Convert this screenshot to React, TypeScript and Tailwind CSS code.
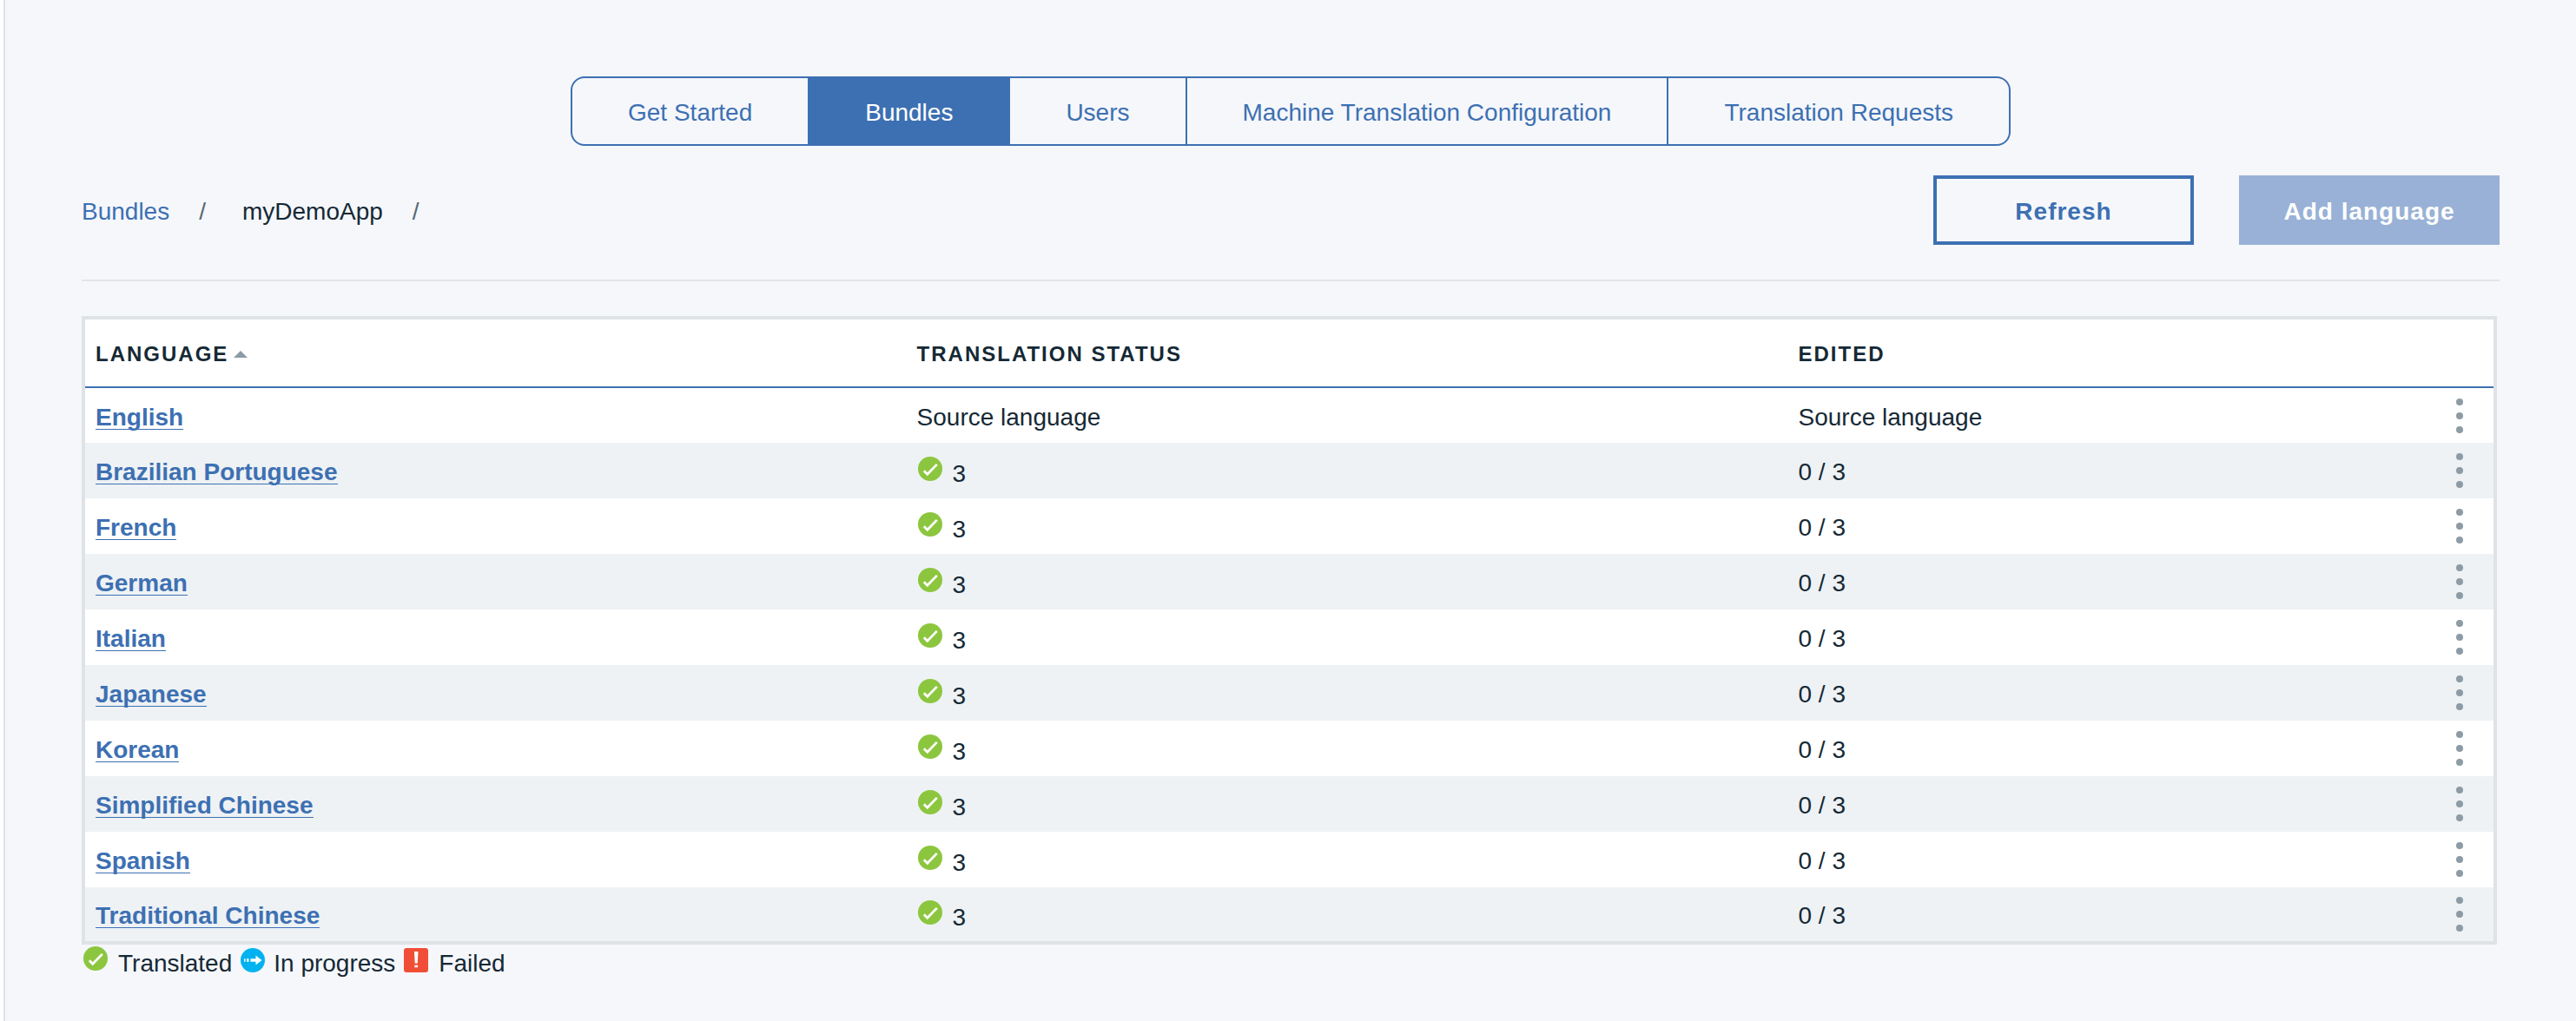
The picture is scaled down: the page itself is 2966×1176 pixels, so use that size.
import React from "react";

const tabs = ["Get Started", "Bundles", "Users", "Machine Translation Configuration", "Translation Requests"];

const languages = [
  "English",
  "Brazilian Portuguese",
  "French",
  "German",
  "Italian",
  "Japanese",
  "Korean",
  "Simplified Chinese",
  "Spanish",
  "Traditional Chinese",
];

function TranslatedIcon() {
  return (
    <svg viewBox="0 0 28 28" className="size-7 shrink-0" aria-hidden="true">
      <circle cx="14" cy="14" r="14" fill="#8cc63f" />
      <path d="M6.800 16.200L10.800 20.300L21.800 8.900" fill="none" stroke="#fff" strokeWidth="2.800" />
    </svg>
  );
}

function ProgressIcon() {
  return (
    <svg viewBox="0 0 28 28" className="mt-0.5 size-7 shrink-0" aria-hidden="true">
      <circle cx="14" cy="14" r="14" fill="#00b2ef" />
      <path d="M4 12.300h1.500v3.400H4zM7 12.300h2.500v3.400H7zM11.500 12.300h6V8.500L24.500 14l-7 5.500v-3.800h-6z" fill="#fff" />
    </svg>
  );
}

function FailedIcon() {
  return (
    <svg viewBox="0 0 28 28" className="mt-0.5 size-7 shrink-0" aria-hidden="true">
      <rect width="28" height="28" rx="3" fill="#f04e37" />
      <path d="M12 4h4.500L15.800 17.500h-3.100zM12.300 19.700h3.800v2.600h-3.800z" fill="#fff" />
    </svg>
  );
}

function MenuDots() {
  return (
    <svg viewBox="0 0 8 40" className="h-10 w-2" aria-hidden="true">
      <circle cx="4" cy="4" r="4" fill="#8c9ba5" />
      <circle cx="4" cy="20" r="4" fill="#8c9ba5" />
      <circle cx="4" cy="36" r="4" fill="#8c9ba5" />
    </svg>
  );
}

export default function App() {
  return (
    <div className="min-h-screen bg-white pl-1 font-['Liberation_Sans',Arial,sans-serif] text-[28px] leading-8 text-[#152935]">
      <main className="min-h-screen border-l-2 border-[#dfe3e6] bg-[#f5f7fb] pt-[88px] pr-[88px] pl-[88px]">
        <nav className="flex justify-center" aria-label="Sections">
          <div className="flex h-20 overflow-hidden rounded-2xl border-2 border-[#3d70b2]">
            {tabs.map((tab, i) => (
              <button
                key={tab}
                type="button"
                className={
                  tab === "Bundles"
                    ? "bg-[#3d70b2] px-[66px] pt-[3px] text-white"
                    : i > 2
                      ? "border-l-2 border-[#3d70b2] px-16 pt-[3px] text-[#3d70b2]"
                      : "px-16 pt-[3px] text-[#3d70b2]"
                }
              >
                {tab}
              </button>
            ))}
          </div>
        </nav>

        <div className="mt-[34px] flex items-center justify-between border-b-2 border-[#e2e4e7] pb-10">
          <nav className="flex items-center pt-[3px]" aria-label="Breadcrumb">
            <a href="#bundles" className="text-[#3d70b2]">Bundles</a>
            <span className="mx-[34px] text-[#5a6872]">/</span>
            <span className="ml-2">myDemoApp</span>
            <span className="mx-[34px] text-[#5a6872]">/</span>
          </nav>
          <div className="flex gap-[52px]">
            <button type="button" className="h-20 w-[300px] border-4 border-[#3d70b2] pt-[3px] font-bold tracking-[1px] text-[#3d70b2]">
              Refresh
            </button>
            <button type="button" disabled className="h-20 w-[300px] bg-[#99b1d6] pt-[3px] font-bold tracking-[1px] text-white">
              Add language
            </button>
          </div>
        </div>

        <div className="mt-10 mr-[3px] border-4 border-[#dfe3e6] bg-white">
          <table className="w-full table-fixed border-separate border-spacing-0 text-left">
            <colgroup>
              <col className="w-[34.1%]" />
              <col className="w-[36.6%]" />
              <col />
              <col className="w-[96px]" />
            </colgroup>
            <thead>
              <tr className="h-[79px] text-2xl">
                <th className="border-b-2 border-[#3d70b2] pt-[3px] pl-3">
                  <button type="button" className="flex items-center gap-1.5 font-bold tracking-[2px]">
                    LANGUAGE
                    <svg viewBox="0 0 16 8" className="h-2 w-4" aria-hidden="true">
                      <path d="M0 8L8 0l8 8z" fill="#8c9ba5" />
                    </svg>
                  </button>
                </th>
                <th className="border-b-2 border-[#3d70b2] pt-[3px] pl-3 font-bold tracking-[2px]">TRANSLATION STATUS</th>
                <th className="border-b-2 border-[#3d70b2] pt-[3px] pl-3 font-bold tracking-[2px]">EDITED</th>
                <td className="border-b-2 border-[#3d70b2]" />
              </tr>
            </thead>
            <tbody>
              {languages.map((language, i) => (
                <tr key={language} className="h-16 first:h-[63px] last:h-[62px] even:bg-[#eef2f5]">
                  <td className="pt-1 pl-3">
                    <a href="#language" className="inline-block border-b border-[#3d70b2] leading-[26px] font-bold text-[#3d70b2]">
                      {language}
                    </a>
                  </td>
                  <td className="pt-1 pl-3">
                    {i === 0 ? (
                      "Source language"
                    ) : (
                      <span className="flex gap-3 pl-px">
                        <TranslatedIcon />
                        <span className="pt-1">3</span>
                      </span>
                    )}
                  </td>
                  <td className="pt-1 pl-3">{i === 0 ? "Source language" : "0 / 3"}</td>
                  <td>
                    <button type="button" className="ml-[53px] flex" aria-label={"Actions for " + language}>
                      <MenuDots />
                    </button>
                  </td>
                </tr>
              ))}
            </tbody>
          </table>
        </div>

        <div className="flex gap-2.5 pt-0.5 pl-0.5">
          <span className="flex gap-3">
            <TranslatedIcon />
            <span className="pt-1">Translated</span>
          </span>
          <span className="flex gap-2.5">
            <ProgressIcon />
            <span className="pt-1">In progress</span>
          </span>
          <span className="flex gap-3">
            <FailedIcon />
            <span className="pt-1">Failed</span>
          </span>
        </div>
      </main>
    </div>
  );
}
